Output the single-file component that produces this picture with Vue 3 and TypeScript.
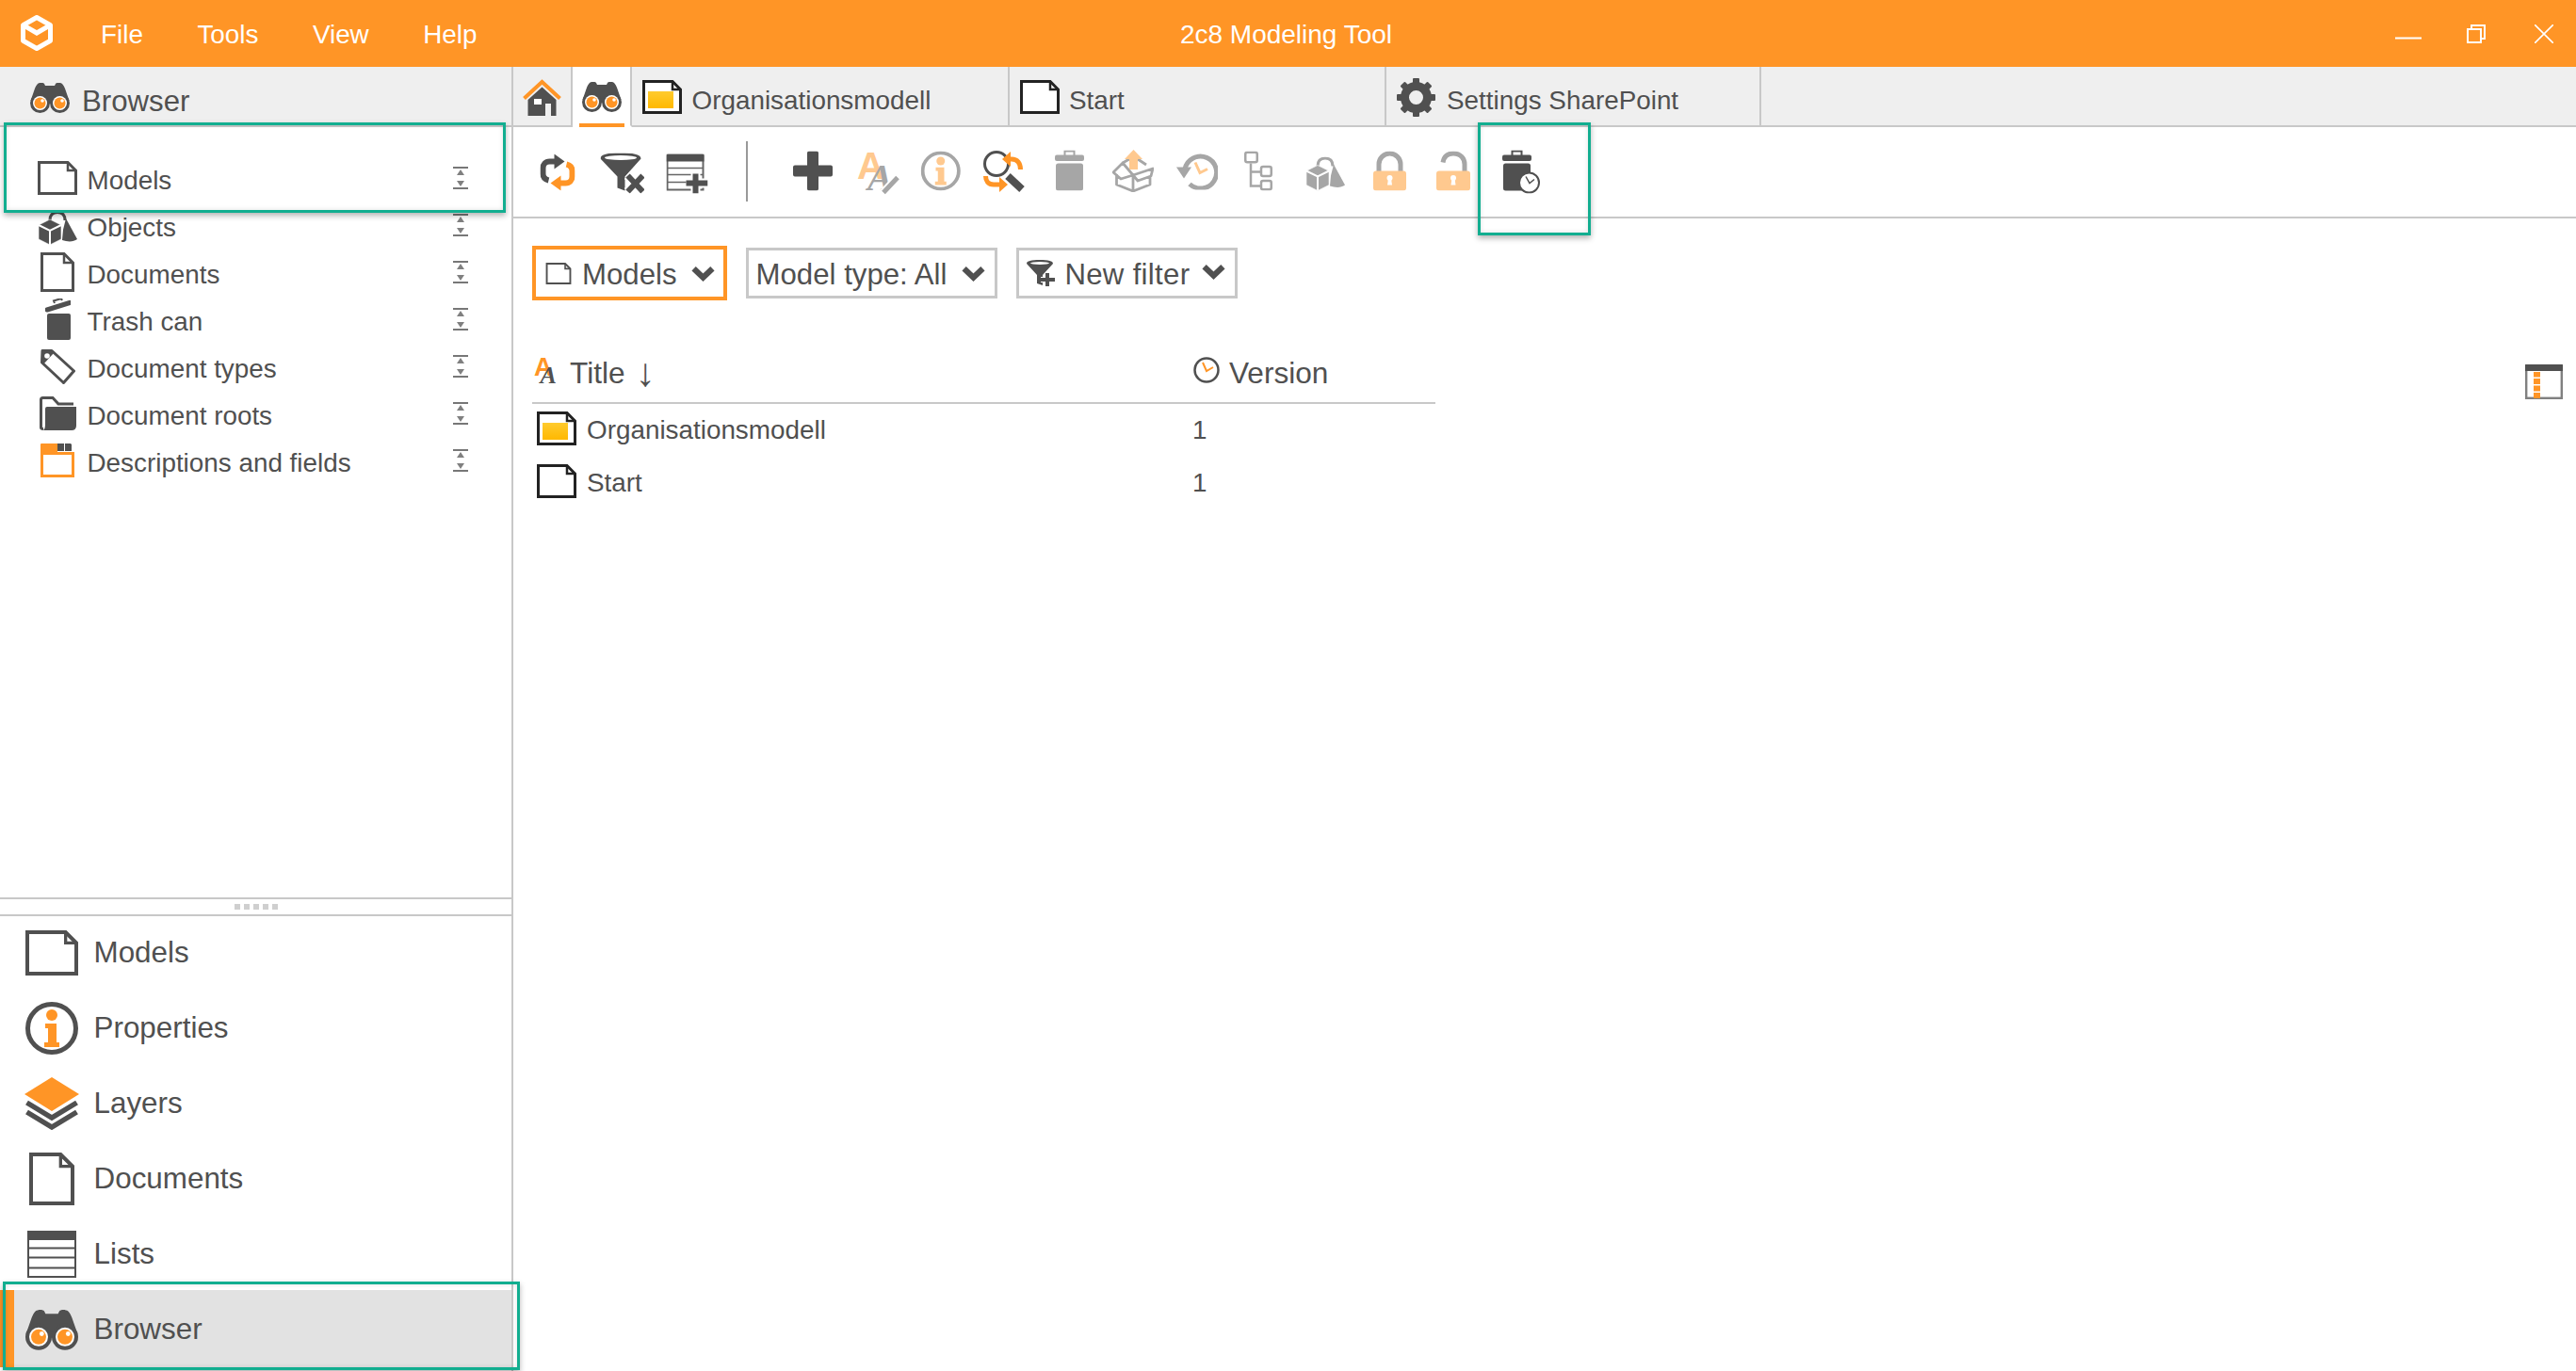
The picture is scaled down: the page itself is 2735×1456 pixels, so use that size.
<script setup lang="ts">
interface Row { label: string; icon: string; w: number; h: number; cls?: string }
interface Tool { id: string; x: number; y: number; w: number; h: number; dim?: boolean }

const menus: string[] = ['File', 'Tools', 'View', 'Help']

const treeRows: Row[] = [
  { label: 'Models', icon: 'page-wide', w: 42, h: 36 },
  { label: 'Objects', icon: 'objects', w: 42, h: 36, cls: 'flat' },
  { label: 'Documents', icon: 'page-tall', w: 36, h: 42 },
  { label: 'Trash can', icon: 'trash-open', w: 27, h: 44 },
  { label: 'Document types', icon: 'tag', w: 37, h: 37 },
  { label: 'Document roots', icon: 'folder', w: 39, h: 36 },
  { label: 'Descriptions and fields', icon: 'fields', w: 36, h: 36 }
]

const navRows: Row[] = [
  { label: 'Models', icon: 'page-wide', w: 56, h: 48 },
  { label: 'Properties', icon: 'info', w: 56, h: 56 },
  { label: 'Layers', icon: 'layers', w: 58, h: 56 },
  { label: 'Documents', icon: 'page-tall', w: 48, h: 56 },
  { label: 'Lists', icon: 'lists', w: 52, h: 50 },
  { label: 'Browser', icon: 'binoc', w: 56, h: 43, cls: 'active' }
]

const toolsA: Tool[] = [
  { id: 'refresh', x: 5.5, y: 4.5, w: 37, h: 39 },
  { id: 'filterx', x: 1.5, y: 3.5, w: 46.5, h: 43 },
  { id: 'listadd', x: 3.5, y: 4.5, w: 44, h: 42 }
]

const toolsB: Tool[] = [
  { id: 'plus', x: 3, y: 1.5, w: 42, h: 42 },
  { id: 'aedit', x: 3, y: 0.5, w: 45, h: 46, dim: true },
  { id: 'info', x: 2.5, y: 1.5, w: 42.5, h: 42, dim: true },
  { id: 'search', x: 1, y: 0, w: 44, h: 45 },
  { id: 'trash', x: 9, y: 0.5, w: 31, h: 43, dim: true },
  { id: 'box', x: 2, y: 0, w: 44, h: 45, dim: true },
  { id: 'history', x: 2, y: 3.5, w: 44, h: 39, dim: true },
  { id: 'tree', x: 6, y: 1.5, w: 30, h: 42, dim: true },
  { id: 'objects', x: 3, y: 7.5, w: 42, h: 36, dim: true },
  { id: 'lock', x: 7, y: 1.5, w: 35, h: 42, dim: true },
  { id: 'unlock', x: 6, y: 1.5, w: 36, h: 42, dim: true },
  { id: 'trashclock', x: 8, y: 0.5, w: 40, h: 46 }
]
</script>

<template>
  <div class="app">
    <svg class="defs" aria-hidden="true">
      <defs>
        <linearGradient id="gold" x1="0" y1="0" x2="0" y2="1">
          <stop offset="0" stop-color="#FFCB2E" />
          <stop offset="1" stop-color="#FFB800" />
        </linearGradient>
      </defs>
      <symbol id="page-wide" viewBox="0 0 42 36">
        <path d="M1.5 1.5H32L40.5 10V34.5H1.5Z" fill="#fff" stroke="currentColor" stroke-width="3" />
        <path d="M32 2V10H40" fill="none" stroke="currentColor" stroke-width="2.5" />
      </symbol>
      <symbol id="page-model" viewBox="0 0 42 36">
        <path d="M1.5 1.5H32L40.5 10V34.5H1.5Z" fill="#fff" stroke="currentColor" stroke-width="3" />
        <path d="M32 2V10H40" fill="none" stroke="currentColor" stroke-width="2.5" />
        <rect x="6" y="12" width="27" height="18" fill="url(#gold)" />
      </symbol>
      <symbol id="page-tall" viewBox="0 0 36 42">
        <path d="M1.5 1.5H25L34.5 11V40.5H1.5Z" fill="#fff" stroke="currentColor" stroke-width="3" />
        <path d="M25 2V11H34" fill="none" stroke="currentColor" stroke-width="2.5" />
      </symbol>
      <symbol id="logo" viewBox="0 0 34 38">
        <path d="M17 2.5 31.5 10.7V27.3L17 35.5 2.5 27.3V10.7Z" fill="none" stroke="#fff" stroke-width="5" stroke-linejoin="round" />
        <path d="M2.5 10.7 17 19 31.5 10.7" fill="none" stroke="#fff" stroke-width="5" />
      </symbol>
      <symbol id="binoc" viewBox="0 0 42 32">
        <path d="M8 1C10-.5 14-.5 15 1L16 3H26L27 1C28-.5 32-.5 34 1 35.500 2.500 36 4 37 6L41.500 19 24 22H18L.5 19 5 6C6 4 6.500 2.500 8 1Z" fill="#505050" />
        <circle cx="10.500" cy="21.500" r="10.500" fill="#505050" />
        <circle cx="31.500" cy="21.500" r="10.500" fill="#505050" />
        <circle cx="10.500" cy="21.500" r="7.500" fill="#fff" />
        <circle cx="31.500" cy="21.500" r="7.500" fill="#fff" />
        <circle cx="10.500" cy="21.500" r="6" fill="#FF9526" />
        <circle cx="31.500" cy="21.500" r="6" fill="#FF9526" />
        <circle cx="13" cy="19" r="1.800" fill="#fff" />
        <circle cx="34" cy="19" r="1.800" fill="#fff" />
      </symbol>
      <symbol id="home" viewBox="0 0 41 39">
        <path d="M5.500 22 20.500 8.500 35.500 22V39H30V26H24V39H5.500Z" fill="#505050" />
        <rect x="12" y="21" width="8" height="6" fill="#fff" />
        <path d="M1.500 20.500 20.500 3 39.500 20.500" fill="none" stroke="#FF9526" stroke-width="4" />
      </symbol>
      <symbol id="gear" viewBox="0 0 43 41">
        <g fill="#505050">
          <rect x="18" y="0" width="7" height="9" rx="1" />
          <rect x="18" y="0" width="7" height="9" rx="1" transform="rotate(45 21.500 20.500)" />
          <rect x="18" y="0" width="7" height="9" rx="1" transform="rotate(90 21.500 20.500)" />
          <rect x="18" y="0" width="7" height="9" rx="1" transform="rotate(135 21.500 20.500)" />
          <rect x="18" y="0" width="7" height="9" rx="1" transform="rotate(180 21.500 20.500)" />
          <rect x="18" y="0" width="7" height="9" rx="1" transform="rotate(225 21.500 20.500)" />
          <rect x="18" y="0" width="7" height="9" rx="1" transform="rotate(270 21.500 20.500)" />
          <rect x="18" y="0" width="7" height="9" rx="1" transform="rotate(315 21.500 20.500)" />
        </g>
        <circle cx="21.500" cy="20.500" r="12" fill="none" stroke="#505050" stroke-width="9" />
      </symbol>
      <symbol id="objects" viewBox="0 0 42 36">
        <path d="M13 10C13 3 17 1.500 21 1.500 26 1.500 29 4 29 10" fill="none" stroke="currentColor" stroke-width="3" />
        <path d="M30 8 42 30C38 33 32 33 26 31L27 20Z" fill="currentColor" />
        <path d="M13 9 25 15V30L13 36 1 30V15Z" fill="currentColor" stroke="#fff" stroke-width=".6" />
        <path d="M1 15 13 21 25 15M13 21V36" fill="none" stroke="#fff" stroke-width="2" />
      </symbol>
      <symbol id="trash-open" viewBox="0 0 27 44">
        <path d="M2 12 26 4.500" stroke="#505050" stroke-width="5" stroke-linecap="round" />
        <path d="M10 5 9 2.500 17 0 18 2" fill="none" stroke="#505050" stroke-width="2" />
        <rect x="2" y="16" width="25" height="28" rx="2" fill="#505050" />
      </symbol>
      <symbol id="tag" viewBox="0 0 37 37">
        <path d="M2 1.500H12L35.500 23 24.500 35.500 1.500 14Z" fill="#fff" stroke="#505050" stroke-width="3" stroke-linejoin="round" />
        <path d="M1.500 1.500H12L14 4 3 16 1.500 14Z" fill="#505050" />
        <circle cx="7" cy="7" r="2.800" fill="#fff" />
      </symbol>
      <symbol id="folder" viewBox="0 0 39 36">
        <path d="M1.500 33V3.500Q1.500 1.500 3.500 1.500H14L20 8H36" fill="none" stroke="#505050" stroke-width="3" />
        <path d="M1.500 33Q1.500 34.500 4 34.500" fill="none" stroke="#505050" stroke-width="3" />
        <path d="M8 11H39V31Q39 36 34 36H4Q6 34 6 31V13Q6 11 8 11Z" fill="#505050" />
      </symbol>
      <symbol id="fields" viewBox="0 0 36 36">
        <rect x="1.500" y="10.500" width="33" height="24" fill="#fff" stroke="#FF9526" stroke-width="3" />
        <path d="M0 1Q0 0 1 0H18V10H0Z" fill="#FF9526" />
        <path d="M18 0H25V8H18ZM26 0H32L33 1V8H26Z" fill="#505050" />
      </symbol>
      <symbol id="info" viewBox="0 0 56 56">
        <circle cx="28" cy="28" r="25.500" fill="#fff" stroke="currentColor" stroke-width="5" />
        <circle cx="28" cy="14" r="6" fill="var(--accent)" />
        <path d="M21 23H33V43H36V48H20V43H24V28H21Z" fill="var(--accent)" />
      </symbol>
      <symbol id="layers" viewBox="0 0 58 56">
        <path d="M2.500 27 29 43 55.500 27M2.500 37 29 53 55.500 37" fill="none" stroke="#505050" stroke-width="5.500" />
        <path d="M29 0 58 18 29 36 0 18Z" fill="#FF9526" />
      </symbol>
      <symbol id="lists" viewBox="0 0 52 50">
        <rect x="1" y="1" width="50" height="48" fill="#fff" stroke="#505050" stroke-width="2" />
        <path d="M0 2Q0 0 2 0H50Q52 0 52 2V10H0Z" fill="#505050" />
        <path d="M1 18.500H51M1 28.500H51M1 39.500H51" stroke="#505050" stroke-width="2" />
      </symbol>
      <symbol id="refresh" viewBox="0 0 37 39">
        <path d="M18 8H10C5.500 8 3 11 3 15V21C3 25 5 27 9 28" fill="none" stroke="#505050" stroke-width="6" />
        <path d="M15 0 26 8 15 16Z" fill="#505050" />
        <path d="M19 31H27C31.500 31 34 28 34 24V18C34 14 32 12 28 11" fill="none" stroke="#FF9526" stroke-width="6" />
        <path d="M22 23 11 31 22 39Z" fill="#FF9526" />
      </symbol>
      <symbol id="filterx" viewBox="0 0 46.500 43">
        <path d="M0 6C0 1 8 0 21 0 34 0 43 1 43 6L26 25V40L18 37V25Z" fill="#505050" />
        <ellipse cx="21.500" cy="5" rx="17" ry="2.500" fill="#fff" />
        <path d="M29 24 45 41M45 24 29 41" stroke="#fff" stroke-width="10" />
        <path d="M29 24 45 41M45 24 29 41" stroke="#505050" stroke-width="6" />
      </symbol>
      <symbol id="listadd" viewBox="0 0 44 42">
        <rect x="1" y="1" width="38" height="37" fill="#fff" stroke="#666" stroke-width="2" />
        <path d="M0 2Q0 0 2 0H38Q40 0 40 2V8H0Z" fill="#505050" />
        <path d="M1 15H39M1 22H39M1 30H39" stroke="#666" stroke-width="1.500" />
        <path d="M31 20V42M21 31H44" stroke="#fff" stroke-width="10" />
        <path d="M31 21V42M21 31H44" stroke="#505050" stroke-width="6" />
      </symbol>
      <symbol id="plus" viewBox="0 0 42 42">
        <path d="M17 0H25Q27 0 27 2V15H40Q42 15 42 17V25Q42 27 40 27H27V40Q27 42 25 42H17Q15 42 15 40V27H2Q0 27 0 25V17Q0 15 2 15H15V2Q15 0 17 0Z" fill="#505050" />
      </symbol>
      <symbol id="search" viewBox="0 0 44 45">
        <circle cx="14" cy="15" r="12.500" fill="none" stroke="#505050" stroke-width="3" />
        <path d="M26 28 41 42" stroke="#505050" stroke-width="8" />
        <path d="M26 10H30C36 10 39.500 14 39.500 21" fill="none" stroke="#FF9526" stroke-width="5" />
        <path d="M29 2 20 10 29 18Z" fill="#FF9526" />
        <path d="M18 37H11C5 37 2.500 33 2.500 28" fill="none" stroke="#FF9526" stroke-width="5" />
        <path d="M17 29 26 37 17 45Z" fill="#FF9526" />
      </symbol>
      <symbol id="trash" viewBox="0 0 31 43">
        <rect x="10.500" y="1" width="10" height="6" fill="none" stroke="currentColor" stroke-width="2" />
        <rect x="0" y="5" width="31" height="6.500" rx="2" fill="currentColor" />
        <rect x="1" y="14" width="29" height="29" rx="2.500" fill="currentColor" />
      </symbol>
      <symbol id="trashclock" viewBox="0 0 40 46">
        <rect x="10.500" y="1" width="10" height="6" fill="none" stroke="#505050" stroke-width="2" />
        <rect x="0" y="5" width="31" height="6.500" rx="2" fill="#505050" />
        <rect x="1" y="14" width="29" height="29" rx="2.500" fill="#505050" />
        <circle cx="28.500" cy="34.500" r="10.500" fill="#fff" stroke="#505050" stroke-width="2" />
        <path d="M25 28 29 35 34 31" fill="none" stroke="#505050" stroke-width="1.500" />
      </symbol>
      <symbol id="box" viewBox="0 0 44 45">
        <path d="M4.500 26V37L22 44 40 37V28M22 27V44M1 24 11 14 22 27 9 31ZM22 27 43 20 41 28 27 33Z" fill="none" stroke="currentColor" stroke-width="2.800" stroke-linejoin="round" />
        <path d="M11 14 18 10M27 10 36 16" fill="none" stroke="currentColor" stroke-width="2.800" />
        <path d="M22.500 0 32 10H27V21H18V10H13Z" fill="var(--accent)" />
      </symbol>
      <symbol id="history" viewBox="0 0 44 39">
        <path d="M9 17A17 17 0 1 1 14 33" fill="none" stroke="currentColor" stroke-width="5" />
        <path d="M0 15H16L8 27Z" fill="currentColor" />
        <path d="M20 10 25 21 33 17" fill="none" stroke="var(--accent)" stroke-width="3" />
      </symbol>
      <symbol id="tree" viewBox="0 0 30 42">
        <path d="M7 13V37H18M7 22H18" fill="none" stroke="currentColor" stroke-width="2.500" />
        <rect x="1.250" y="1.250" width="12.500" height="10.500" rx="2" fill="#fff" stroke="currentColor" stroke-width="2.500" />
        <rect x="18" y="16.500" width="10.750" height="10" rx="2" fill="#fff" stroke="currentColor" stroke-width="2.500" />
        <rect x="18" y="31.500" width="10.750" height="9.250" rx="2" fill="#fff" stroke="currentColor" stroke-width="2.500" />
      </symbol>
      <symbol id="lock" viewBox="0 0 35 42">
        <path d="M6 22V14A11.500 11.500 0 0 1 29 14V22" fill="none" stroke="currentColor" stroke-width="5" />
        <rect x="0" y="21" width="35" height="21" rx="3" fill="var(--accent)" />
        <circle cx="17.500" cy="28.500" r="3" fill="#fff" />
        <path d="M16 29H19L20 36H15Z" fill="#fff" />
      </symbol>
      <symbol id="unlock" viewBox="0 0 36 42">
        <path d="M7 12C8 6 12 2.500 18 2.500 26 2.500 30 8 30 14V22" fill="none" stroke="currentColor" stroke-width="5" />
        <rect x="0" y="21" width="36" height="21" rx="3" fill="var(--accent)" />
        <circle cx="18" cy="28.500" r="3" fill="#fff" />
        <path d="M16.500 29H19.500L20.500 36H15.500Z" fill="#fff" />
      </symbol>
      <symbol id="funnelplus" viewBox="0 0 30 28">
        <path d="M0 4C0 1 5 0 14 0 23 0 28 1 28 4L17 16V27L11 25V16Z" fill="#505050" />
        <ellipse cx="14" cy="3.500" rx="10" ry="1.500" fill="#fff" />
        <path d="M22 14V28M15 21H30" stroke="#fff" stroke-width="6" />
        <path d="M22 14V28M15 21H30" stroke="#505050" stroke-width="4" />
      </symbol>
      <symbol id="clock" viewBox="0 0 28 28">
        <circle cx="14" cy="14" r="12.500" fill="#fff" stroke="#505050" stroke-width="2.500" />
        <path d="M10 6 14 15 21 11" fill="none" stroke="#FF9526" stroke-width="2" />
      </symbol>
      <symbol id="columns" viewBox="0 0 40 37">
        <rect x="1.200" y="1.200" width="37.600" height="34.600" fill="#fff" stroke="#808080" stroke-width="2.400" />
        <path d="M0 1Q0 0 1 0H39Q40 0 40 1V7H0Z" fill="#505050" />
        <path d="M9 8H16V13.500H9ZM9 15H16V21H9ZM9 22.500H16V28.500H9ZM9 30H16V36H9Z" fill="#FF9526" />
      </symbol>
      <symbol id="chev" viewBox="0 0 24 16">
        <path d="M2.500 3 12 12 21.500 3" fill="none" stroke="#505050" stroke-width="6" />
      </symbol>
      <symbol id="expand" viewBox="0 0 16 24">
        <path d="M0 1H16M0 23H16" stroke="#777" stroke-width="2" />
        <path d="M8 3 12 9H4ZM8 21 12 15H4Z" fill="#808080" />
      </symbol>
    </svg>

    <header class="titlebar">
      <div class="title-left">
        <svg class="logo" width="34" height="38"><use href="#logo" /></svg>
        <nav class="menu">
          <span v-for="m in menus" :key="m">{{ m }}</span>
        </nav>
      </div>
      <div class="app-title">2c8 Modeling Tool</div>
      <div class="win-controls">
        <svg width="28" height="20" viewBox="0 0 28 20"><path d="M0 14.500H28" stroke="#fff" stroke-width="2" /></svg>
        <svg width="20" height="20" viewBox="0 0 20 20">
          <rect x="5" y="1" width="14" height="14" fill="none" stroke="#fff" stroke-width="2" />
          <rect x="1" y="5" width="14" height="14" fill="#FF9526" stroke="#fff" stroke-width="2" />
        </svg>
        <svg width="20" height="20" viewBox="0 0 20 20"><path d="M0 0 20 20M20 0 0 20" stroke="#fff" stroke-width="1.600" /></svg>
      </div>
    </header>

    <div class="body">
      <aside class="sidebar">
        <div class="side-head">
          <svg class="side-head-icon" width="42" height="32"><use href="#binoc" /></svg>
          <span>Browser</span>
        </div>
        <ul class="tree">
          <li v-for="r in treeRows" :key="r.label" class="tree-row">
            <span class="tree-icon" :class="r.cls">
              <svg :width="r.w" :height="r.h"><use :href="'#' + r.icon" /></svg>
            </span>
            <span class="tree-label">{{ r.label }}</span>
            <svg class="expand" width="16" height="24"><use href="#expand" /></svg>
          </li>
        </ul>
        <div class="splitter"><i v-for="n in 5" :key="n"></i></div>
        <ul class="nav">
          <li v-for="r in navRows" :key="r.label" class="nav-row" :class="r.cls">
            <span class="nav-icon">
              <svg :width="r.w" :height="r.h"><use :href="'#' + r.icon" /></svg>
            </span>
            <span>{{ r.label }}</span>
          </li>
        </ul>
      </aside>

      <main class="main">
        <div class="tabs">
          <div class="tab tab-icon"><svg width="41" height="39"><use href="#home" /></svg></div>
          <div class="tab tab-icon on"><svg width="42" height="32"><use href="#binoc" /></svg></div>
          <div class="tab tab-org">
            <svg class="ink" width="42" height="36"><use href="#page-model" /></svg>
            <span>Organisationsmodell</span>
          </div>
          <div class="tab tab-org">
            <svg class="ink" width="42" height="36"><use href="#page-wide" /></svg>
            <span>Start</span>
          </div>
          <div class="tab tab-set">
            <svg width="43" height="41"><use href="#gear" /></svg>
            <span>Settings SharePoint</span>
          </div>
        </div>

        <div class="toolbar">
          <span v-for="t in toolsA" :key="t.id" class="tool">
            <svg width="48" height="48" viewBox="0 0 48 48"><use :href="'#' + t.id" :x="t.x" :y="t.y" :width="t.w" :height="t.h" /></svg>
          </span>
          <span class="sep"></span>
          <span v-for="t in toolsB" :key="t.id" class="tool" :class="{ dim: t.dim }">
            <svg v-if="t.id === 'aedit'" width="48" height="48" viewBox="0 0 48 48">
              <g transform="translate(3 0.5)">
                <text x="0" y="30" class="a-sans">A</text>
                <text x="11" y="42" class="a-serif">A</text>
                <path d="M28 45 43 29" stroke="#fff" stroke-width="9" />
                <path d="M28 45 43 29" stroke="#A6A6A6" stroke-width="5" />
              </g>
            </svg>
            <svg v-else width="48" height="48" viewBox="0 0 48 48"><use :href="'#' + t.id" :x="t.x" :y="t.y" :width="t.w" :height="t.h" /></svg>
          </span>
        </div>

        <div class="content">
          <section class="list">
            <div class="filters">
              <button class="pick pick-on">
                <svg width="28" height="23"><use href="#page-wide" /></svg>
                <span>Models</span>
                <svg class="chev" width="25" height="17"><use href="#chev" /></svg>
              </button>
              <button class="pick">
                <span>Model type: All</span>
                <svg class="chev" width="25" height="17"><use href="#chev" /></svg>
              </button>
              <button class="pick">
                <svg width="30" height="28"><use href="#funnelplus" /></svg>
                <span class="wide">New filter</span>
                <svg class="chev up" width="25" height="17"><use href="#chev" /></svg>
              </button>
            </div>

            <div class="thead">
              <div class="th th-title">
                <svg class="open" width="29" height="28" viewBox="0 0 29 28">
                  <text x="0" y="20" class="t-sans">A</text>
                  <text x="6.500" y="28" class="t-serif">A</text>
                </svg>
                <span>Title</span>
                <span class="arrow">↓</span>
              </div>
              <div class="th th-ver">
                <svg width="28" height="28"><use href="#clock" /></svg>
                <span>Version</span>
              </div>
            </div>
            <div class="trow">
              <div class="td-title">
                <svg class="ink" width="42" height="36"><use href="#page-model" /></svg>
                <span>Organisationsmodell</span>
              </div>
              <div>1</div>
            </div>
            <div class="trow">
              <div class="td-title">
                <svg class="ink" width="42" height="36"><use href="#page-wide" /></svg>
                <span>Start</span>
              </div>
              <div>1</div>
            </div>
          </section>
          <svg class="col-btn" width="40" height="37"><use href="#columns" /></svg>
        </div>
      </main>
    </div>

    <div class="mark mark-models"></div>
    <div class="mark mark-tool"></div>
    <div class="mark mark-browser"></div>
  </div>
</template>

<style scoped>
.app {
  --accent: #FF9526;
  position: relative;
  width: 2735px;
  height: 1456px;
  overflow: hidden;
  display: flex;
  flex-direction: column;
  background: #fff;
  color: #505050;
  font-family: "Liberation Sans", Arial, sans-serif;
  font-size: 27.85px;
}
.defs { position: absolute; width: 0; height: 0; }
svg { display: block; flex: none; color: #505050; }
.ink { color: #222; }
.open { overflow: visible; }

.titlebar {
  height: 71px;
  flex: none;
  background: #FF9526;
  color: #fff;
  display: grid;
  grid-template-columns: 1fr auto 1fr;
  align-items: center;
}
.title-left { display: flex; align-items: center; padding-left: 22px; }
.logo { margin-top: -1px; }
.menu { display: flex; gap: 57.5px; margin-left: 51px; padding-top: 3px; }
.app-title { padding: 3px 4px 0 0; font-size: 28px; }
.win-controls { display: flex; justify-content: flex-end; align-items: center; padding-right: 24px; }
.win-controls svg:nth-child(2) { margin-left: 48px; }
.win-controls svg:nth-child(3) { margin-left: 52px; }

.body { flex: 1; display: flex; min-height: 0; }

.sidebar {
  width: 545px;
  flex: none;
  box-sizing: border-box;
  border-right: 2px solid #C8C8C8;
  display: flex;
  flex-direction: column;
}
.side-head {
  height: 64px;
  flex: none;
  box-sizing: border-box;
  background: #EFEFEF;
  border-bottom: 2px solid #C8C8C8;
  display: flex;
  align-items: center;
  padding-left: 32px;
  font-size: 31.2px;
}
.side-head-icon { margin: 4px 13px 0 0; }
.side-head span { padding-top: 12px; }

.tree { flex: 1; margin: 0; padding: 32px 0 0; list-style: none; }
.tree-row { height: 50px; display: flex; align-items: center; padding-right: 46px; }
.tree-icon {
  width: 42px;
  margin: 0 0 6px 40px;
  display: flex;
  justify-content: center;
}
.tree-icon.flat { margin-bottom: 0; }
.tree-label { margin-left: 10.5px; }
.expand { margin: 0 0 6px auto; }

.splitter {
  height: 20px;
  flex: none;
  box-sizing: border-box;
  border-top: 2px solid #C8C8C8;
  border-bottom: 2px solid #C8C8C8;
  display: flex;
  justify-content: center;
  align-items: center;
  gap: 4px;
}
.splitter i { width: 6px; height: 6px; background: #CFCFCF; }

.nav { flex: none; margin: -1px 0 4px; padding: 0; list-style: none; font-size: 31.4px; }
.nav-row { height: 80px; display: flex; align-items: center; padding-left: 26px; }
.nav-icon { width: 58px; display: flex; justify-content: center; margin-right: 15.5px; }
.nav-row.active {
  height: 82px;
  margin-top: -2px;
  padding: 2px 0 0 11px;
  box-sizing: border-box;
  border-left: 15px solid #FF9526;
  background: #E2E2E2;
}

.main { flex: 1; min-width: 0; display: flex; flex-direction: column; }

.tabs {
  height: 64px;
  flex: none;
  box-sizing: border-box;
  background: #EFEFEF;
  border-bottom: 2px solid #C8C8C8;
  display: flex;
}
.tab {
  position: relative;
  height: 64px;
  box-sizing: border-box;
  border-right: 2px solid #C8C8C8;
  border-bottom: 2px solid #C8C8C8;
  display: flex;
  align-items: center;
}
.tab-icon { width: 63px; justify-content: center; }
.tab-icon svg { margin-top: 2px; }
.tab-icon.on { background: #fff; border-bottom-color: #fff; }
.tab-icon.on::after {
  content: "";
  position: absolute;
  left: 7px;
  width: 48px;
  bottom: -2px;
  height: 4px;
  background: #FF9526;
}
.tab-org { width: 400.5px; padding-left: 11px; gap: 10.5px; }
.tab-org svg { margin-top: 2px; }
.tab-org span { padding-top: 10px; }
.tab-set { width: 397.5px; padding-left: 10px; gap: 11px; }
.tab-set svg { margin-top: 2px; }
.tab-set span { padding-top: 10px; }

.toolbar {
  height: 97px;
  flex: none;
  box-sizing: border-box;
  border-bottom: 2px solid #C8C8C8;
  display: flex;
  align-items: center;
  padding-left: 12.5px;
}
.tool { width: 68px; display: flex; justify-content: center; }
.tool svg { overflow: visible; }
.tool.dim svg { color: #A6A6A6; --accent: #FFC98F; }
.sep { width: 2px; height: 64px; background: #999; margin: -1px 34.500px 0 30.500px; }

.a-sans { font-family: "Liberation Sans", sans-serif; font-weight: 700; font-size: 40px; fill: #FFC98F; }
.a-serif { font-family: "Liberation Serif", serif; font-weight: 700; font-style: italic; font-size: 40px; fill: #A6A6A6; }
.t-sans { font-family: "Liberation Sans", sans-serif; font-weight: 700; font-size: 27px; fill: #FF9526; }
.t-serif { font-family: "Liberation Serif", serif; font-weight: 700; font-style: italic; font-size: 26px; fill: #505050; }

.content { flex: 1; display: flex; align-items: flex-start; }
.list { width: 959px; margin-left: 20px; flex: none; }
.col-btn { margin: 155px 14px 0 auto; }

.filters { display: flex; align-items: center; gap: 20px; margin-top: 29px; }
.pick {
  height: 54px;
  box-sizing: border-box;
  border: 3px solid #C8C8C8;
  background: #fff;
  color: #505050;
  font: inherit;
  font-size: 31.2px;
  display: flex;
  align-items: center;
  padding: 0 10px 0 8px;
}
.pick span { padding-top: 3px; }
.pick svg:first-child { margin-right: 10px; }
.pick .wide { letter-spacing: 0.3px; }
.chev { margin-left: 16px; }
.chev.up { margin: -4px 0 0 13px; }
.pick-on {
  height: 58px;
  border: 4px solid #FF9526;
  padding: 0 9px 0 10px;
}
.pick-on svg:first-child { margin-right: 11px; }
.pick-on .chev { margin-left: 15px; }

.thead {
  height: 61px;
  box-sizing: border-box;
  margin-top: 49px;
  padding-bottom: 3px;
  border-bottom: 2px solid #C8C8C8;
  display: flex;
  align-items: center;
  font-size: 31.6px;
}
.th { display: flex; align-items: center; }
.th svg { margin-bottom: 6px; }
.th-title { width: 700px; padding-left: 2px; box-sizing: border-box; gap: 9px; }
.th-ver { padding-left: 2px; gap: 10px; }
.arrow { margin-left: 2px; font-size: 42px; line-height: 1; }

.trow { height: 56px; display: flex; align-items: center; }
.trow svg { margin-bottom: 4px; }
.td-title { width: 701px; box-sizing: border-box; padding-left: 5px; display: flex; align-items: center; gap: 11px; }

.mark {
  position: absolute;
  box-sizing: border-box;
  border: 3px solid #12AE90;
  box-shadow: 0 3px 6px rgba(0, 0, 0, 0.3), inset 0 0 5px rgba(0, 0, 0, 0.12);
  pointer-events: none;
}
.mark-models { left: 4px; top: 130px; width: 533px; height: 96px; }
.mark-tool { left: 1569px; top: 130px; width: 120px; height: 120px; }
.mark-browser { left: 3px; top: 1361px; width: 549px; height: 94px; }
</style>

<style>
html, body { margin: 0; padding: 0; background: #fff; }
</style>
